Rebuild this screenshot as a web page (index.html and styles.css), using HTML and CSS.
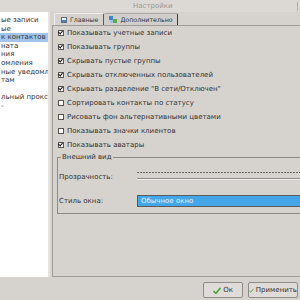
FILE: index.html
```html
<!DOCTYPE html>
<html>
<head>
    <link rel="stylesheet" href="styles.css">
</head>
<body>
<div class="window">
  <div class="titlebar">
    <span class="title">Настройки</span>
    <span class="close"></span>
  </div>
  <div class="main">
    <ul class="nav">
      <li>ые записи</li>
      <li>ые</li>
      <li class="selected">к контактов</li>
      <li>ната</li>
      <li>ния</li>
      <li>омления</li>
      <li>ные уведомлен</li>
      <li>там</li>
      <li></li>
      <li>льный прокси</li>
      <li>-</li>
    </ul>
    <div class="tabwidget">
      <div class="tabbar">
        <div class="tab active">
          <svg class="icon" width="6" height="6" viewBox="0 0 6 6"><rect x="0.5" y="0.5" width="5" height="5" fill="#eef2f6" stroke="#5a6f86"/><rect x="1" y="3" width="4" height="2" fill="#4f7fb3"/></svg>
          Главные
        </div>
        <div class="tab">
          <svg class="icon" width="8" height="8" viewBox="0 0 8 8"><rect x="0" y="0" width="4" height="4" fill="#3f86c9"/><rect x="4" y="3" width="4" height="4" fill="#62a84a"/><rect x="1" y="4" width="3" height="3" fill="#9cc3e6"/></svg>
          Дополнительно
        </div>
      </div>
      <div class="pane">
        <label class="check"><span class="box on"></span>Показывать учетные записи</label>
        <label class="check"><span class="box on"></span>Показывать группы</label>
        <label class="check"><span class="box on"></span>Скрывать пустые группы</label>
        <label class="check"><span class="box on"></span>Скрывать отключенных пользователей</label>
        <label class="check"><span class="box on"></span>Скрывать разделение "В сети/Отключен"</label>
        <label class="check"><span class="box"></span>Сортировать контакты по статусу</label>
        <label class="check"><span class="box"></span>Рисовать фон альтернативными цветами</label>
        <label class="check"><span class="box"></span>Показывать значки клиентов</label>
        <label class="check"><span class="box on"></span>Показывать аватары</label>
        <fieldset class="group">
          <legend>Внешний вид</legend>
          <div class="field">
            <span class="label">Прозрачность:</span>
            <div class="slider"><div class="ticks"></div><div class="groove"></div></div>
          </div>
          <div class="field combo-row">
            <span class="label">Стиль окна:</span>
            <div class="combo">Обычное окно</div>
          </div>
        </fieldset>
      </div>
    </div>
  </div>
  <div class="buttons">
    <button class="btn ok">
      <svg width="8" height="7" viewBox="0 0 8 7"><path d="M0.5 4 L3 6.3 L7.5 0.8" fill="none" stroke="#4aa83a" stroke-width="1.6"/></svg>
      Ок
    </button>
    <button class="btn apply">
      <svg width="8" height="7" viewBox="0 0 8 7"><path d="M0.5 4 L3 6.3 L7.5 0.8" fill="none" stroke="#4aa83a" stroke-width="1.6"/></svg>
      Применить
    </button>
  </div>
</div>
</body>
</html>
```

FILE: styles.css
```css
body {
  margin: 0;
  font: 7px/8px "DejaVu Sans", sans-serif;
  color: #333;
  background: #d6d2ce;
}
.window {
  width: 300px;
  height: 300px;
  overflow: hidden;
}
.titlebar {
  height: 12px;
  display: flex;
  align-items: center;
  background: #dcd9d5;
}
.title {
  padding-left: 133px;
  color: #9a9794;
}
.close {
  margin-left: auto;
  margin-right: 2px;
  width: 1px;
  height: 9px;
  background: #b3afab;
}
.main {
  display: flex;
  height: 265px;
}
.nav {
  list-style: none;
  margin: 0;
  padding: 4px 0 0 0;
  width: 48px;
  border-right: 2px solid #e6e3e0;
  background: #fff;
  overflow: hidden;
  white-space: nowrap;
}
.nav li {
  height: 8.6px;
  line-height: 8.6px;
  padding-left: 1px;
}
.nav li.selected {
  background: #a3c5e9;
}
.tabwidget {
  margin-left: 2px;
  flex: 1;
  display: flex;
  flex-direction: column;
  margin-right: -20px;
}
.tabbar {
  display: flex;
  height: 12px;
  margin-top: 1px;
  padding-left: 2px;
  font-size: 6.3px;
}
.tab {
  display: flex;
  align-items: center;
  gap: 3px;
  padding: 0 4px 0 5px;
  border: 1px solid #aaa6a2;
  border-bottom: none;
  border-radius: 2px 2px 0 0;
  background: #d2cecb;
  white-space: nowrap;
}
.tab.active {
  padding: 0 5px 0 6px;
  background: #d6d2ce;
  border-color: #f0eeec #5c5955 #d6d2ce #f0eeec;
}
.tab + .tab {
  border-left: none;
  border-right-color: #3c3a38;
}
.icon {
  display: block;
  flex: none;
}
.pane {
  flex: 1;
  border: 1px solid #a09c98;
  border-right: none;
  padding-left: 5px;
}
.check {
  display: flex;
  align-items: center;
  height: 14px;
}
.box {
  box-sizing: border-box;
  flex: none;
  width: 6px;
  height: 6px;
  margin-right: 3px;
  border: 1px solid #595652;
  background: #fff;
  position: relative;
}
.box.on::after {
  content: "";
  position: absolute;
  left: 0;
  top: -1px;
  width: 2px;
  height: 3px;
  border: solid #111;
  border-width: 0 1px 1px 0;
  transform: rotate(40deg);
}
.group {
  margin: 1px 0 0 -1px;
  padding: 8px 0 6px 1px;
  border: 1px solid #8e8a86;
  border-right: none;
}
.group legend {
  padding: 0 1px;
  margin-left: 2px;
  line-height: 8px;
}
.field {
  display: flex;
  align-items: center;
  height: 16px;
}
.combo-row {
  height: 12px;
  margin-top: 10px;
}
.label {
  width: 78px;
  flex: none;
}
.slider {
  flex: 1;
  height: 16px;
}
.ticks {
  margin-top: 3px;
  height: 1px;
  background: repeating-linear-gradient(90deg, #6a6764 0 2px, transparent 2px 3px);
}
.groove {
  margin-top: 5px;
  height: 1px;
  background: #8c8884;
  border-bottom: 1px solid #f2f0ee;
}
.combo {
  flex: 1;
  box-sizing: border-box;
  height: 12px;
  border: 1px solid #5d5a57;
  background: #42a6e8;
  color: #eaf4fc;
  padding-left: 3px;
  line-height: 10px;
}
.buttons {
  display: flex;
  justify-content: flex-end;
  gap: 5px;
  padding: 5px 2px 0 0;
}
.btn {
  display: flex;
  align-items: center;
  justify-content: center;
  gap: 2px;
  height: 16px;
  padding: 0;
  font: 7px "DejaVu Sans", sans-serif;
  color: #333;
  background: #dedbd8;
  border: 1px solid #8f8b87;
  border-radius: 2px;
}
.ok {
  width: 40px;
}
.apply {
  width: 50px;
}
```
